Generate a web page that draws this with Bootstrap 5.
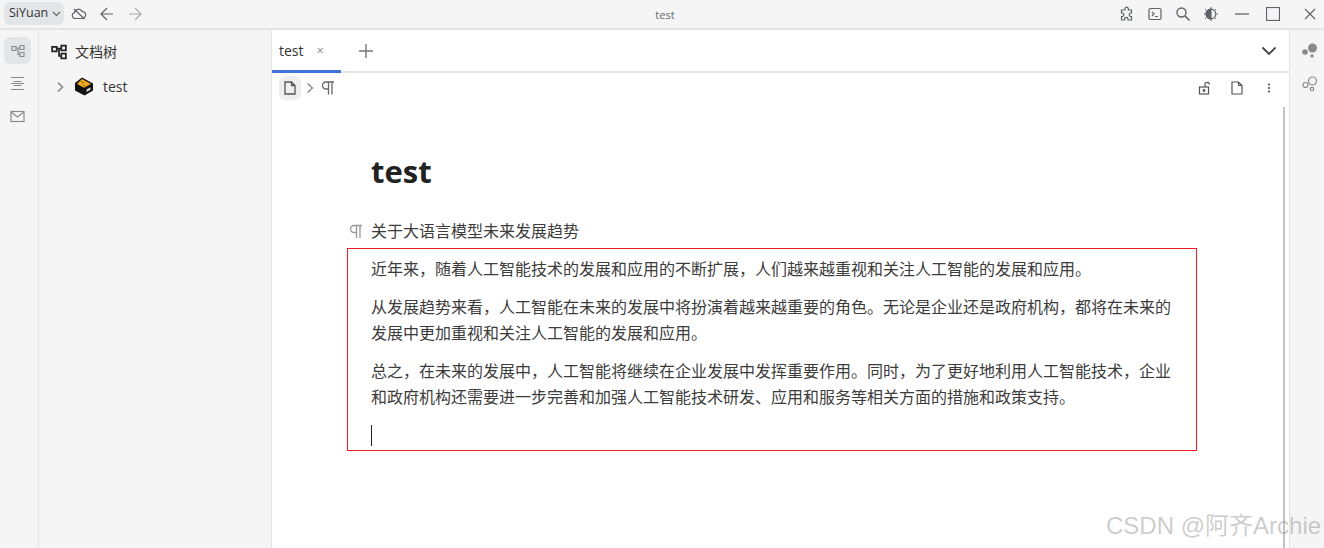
<!DOCTYPE html>
<html lang="zh">
<head>
<meta charset="utf-8">
<title>test</title>
<link href="https://cdn.jsdelivr.net/npm/bootstrap@5.3.0/dist/css/bootstrap.min.css" rel="stylesheet">
<style>
html,body{height:100%;overflow:hidden}
body{font-family:"Open Sans","Noto Sans CJK SC",sans-serif;color:#222;background:#fff;font-size:14px}
svg{display:block;fill:none;stroke:currentColor;stroke-width:1.2}
.app-shell{width:1324px;height:548px;position:relative;overflow:hidden}
.top-bar{height:30px;background:#f5f5f5;border-bottom:2px solid #e4e4e4;color:#5f6368;padding-left:4px;padding-right:6px}
.brand-btn{height:23px;width:60px;margin-top:-1px;border-radius:6px;background:#e3e5e7;font-size:12.5px;color:#333;padding-left:5px;gap:4px}
.brand-btn svg{color:#666}
.top-title{position:absolute;left:6px;right:0;top:7px;text-align:center;font-size:11px;color:#6b6b6b}
.top-ico{width:16px;height:16px}
.ico-cloud{margin-left:7px}
.ico-nav{margin-left:12px}
.ico-min{margin-left:4px;width:14px;height:14px}
.ico-max{margin-left:5px;width:14px;height:14px}
.ico-close{margin-left:12px;margin-right:2px;width:12px;height:12px}
.dock-left{width:39px;background:#f5f5f5;border-right:1px solid #e4e4e4;padding:7px 4px;gap:6px;color:#8a8a8a}
.dock-btn{width:27px;height:27px;border-radius:6px}
.dock-btn.is-on{background:#e3e5e7}
.tree-pane{width:233px;background:#f5f5f5;border-right:1px solid #e4e4e4}
.tree-head{height:43px;padding-left:12px;gap:8px;font-size:14px;color:#333}
.tree-row{height:27px;padding-left:17px;color:#333}
.tree-name{font-size:14px;margin-left:9px}
.tree-logo{margin-left:8px}
.main-pane{width:1017px;min-width:0;background:#fff;position:relative}
.tab-bar{height:43px;border-bottom:2px solid #e4e4e4;position:relative}
.doc-tab{width:69px;height:43px;border-bottom:3px solid #4470dc;margin-bottom:-2px;padding-left:7px;padding-top:1px;font-size:14px;color:#333;gap:13px}
.tab-x{font-size:13px;color:#888;line-height:1}
.tab-plus{margin:14px 0 0 18px;color:#777}
.tab-more{margin:16px 12px 0 auto;color:#444}
.crumb-bar{height:30px;padding-left:7px;padding-right:15px;color:#555}
.crumb-doc{width:22px;height:24px;border-radius:6px;background:#efefef}
.crumb-arrow{margin-left:5px;color:#888}
.crumb-para{margin-left:6px;color:#666}
.act-gap{margin-left:18px}
.act-gap-b{margin-left:20px}
.editor-pane{position:relative;height:445px}
.doc-title{font-size:31px;font-weight:700;line-height:44px;margin:0;padding:46px 0 0 99px;height:91px;color:#222}
.para-first{margin:24px 0 0;font-size:16px;line-height:26px;height:26px;padding-left:99px;position:relative;color:#3c3c3c}
.para-mark{position:absolute;left:77px;top:6px;color:#999}
.red-frame{width:850px;height:203px;margin-left:75px;margin-top:4px;border:1px solid #f01a24;padding:7px 22px 0 23px;font-size:16px;line-height:26px;color:#3c3c3c}
.red-frame p{margin:0 0 12px}
.caret-line{width:1px;height:21px;background:#222;margin-top:15px}
.scroll-thumb{position:absolute;right:4px;top:4px;bottom:0;width:2px;background:#c4c4c4}
.dock-right{width:35px;background:#f5f5f5;border-left:1px solid #e4e4e4;padding:12px 0 0 6px;gap:15px;color:#8a8a8a}
.water-mark{position:absolute;left:1106px;top:510px;font-family:"Liberation Sans","Noto Sans CJK SC",sans-serif;font-size:24px;line-height:32px;color:rgba(120,120,120,.38);white-space:nowrap}
</style>
</head>
<body>
<div class="app-shell d-flex flex-column">
  <div class="top-bar d-flex align-items-center flex-shrink-0">
    <div class="brand-btn d-flex align-items-center">SiYuan
      <svg width="9" height="6" viewBox="0 0 9 6"><path d="M1 1l3.500 3.500L8 1"/></svg></div>
    <svg class="ico-cloud top-ico" viewBox="0 0 16 16"><path d="M4 12.500a3 3 0 0 1-.5-5.900A4 4 0 0 1 11 5.400a3.400 3.400 0 0 1 2 6.300c-.5.600-1.200.8-2 .8zM3 3l10.500 10"/></svg>
    <svg class="ico-nav top-ico" viewBox="0 0 16 16"><path d="M14 8H2M8 2L2 8l6 6"/></svg>
    <svg class="ico-nav top-ico opacity-50" viewBox="0 0 16 16"><path d="M2 8h12M8 2l6 6-6 6"/></svg>
    <div class="top-title">test</div>
    <div class="ms-auto d-flex align-items-center" style="gap:12px">
      <svg class="top-ico" viewBox="0 0 16 16"><path d="M6 2.500a1.700 1.700 0 0 1 3.300 0V4h3.200v3h-1a1.800 1.800 0 0 0 0 3.500h1v3.500H9v-1a1.700 1.700 0 0 0-3.400 0v1H2.500v-3.500h1a1.800 1.800 0 0 0 0-3.500h-1V4H6z"/></svg>
      <svg class="top-ico" viewBox="0 0 16 16"><rect x="2" y="2.500" width="12" height="11" rx="1.500"/><path d="M5 6l2 2-2 2M8 10.500h3"/></svg>
      <svg class="top-ico" viewBox="0 0 16 16"><circle cx="6.500" cy="6.500" r="4.500" stroke-width="1.400"/><path d="M10 10l4.500 4.500" stroke-width="1.600"/></svg>
      <svg class="top-ico" viewBox="0 0 16 16"><circle cx="8" cy="8" r="4.800"/><path d="M8 3a5 5 0 0 0 0 10z" fill="currentColor"/><path d="M8 1v1.500M8 13.500V15M2 3l1 1M13 3l-1 1M2 13l1-1M13 13l-1-1M1 8h1.500M13.500 8H15" stroke-width="1"/></svg>
      <svg class="ico-min" viewBox="0 0 14 14"><path d="M0 7h14" stroke-width="1.300"/></svg>
      <svg class="ico-max" viewBox="0 0 14 14"><rect x=".5" y=".5" width="13" height="13"/></svg>
      <svg class="ico-close" viewBox="0 0 12 12"><path d="M1 1l10 10M11 1L1 11" stroke-width="1.200"/></svg>
    </div>
  </div>
  <div class="d-flex flex-grow-1" style="min-height:0">
    <div class="dock-left d-flex flex-column flex-shrink-0">
      <div class="dock-btn is-on d-flex align-items-center justify-content-center">
        <svg width="14" height="14" viewBox="0 0 14 14"><path d="M1 2.500h4v4H1zM9 1.500h4v4H9zM9 8.500h4v4H9zM5 4h4M7 4v6.500h2"/></svg></div>
      <div class="dock-btn d-flex align-items-center justify-content-center">
        <svg width="15" height="15" viewBox="0 0 15 15"><path d="M1 1.500h13M3.500 5.500h8M1 7.500h13M3.500 9.500h8M1 13.500h13"/></svg></div>
      <div class="dock-btn d-flex align-items-center justify-content-center">
        <svg width="15" height="15" viewBox="0 0 15 15"><rect x="1" y="2.500" width="13" height="10"/><path d="M1 3l6.500 5L14 3"/></svg></div>
    </div>
    <div class="tree-pane d-flex flex-column flex-shrink-0">
      <div class="tree-head d-flex align-items-center">
        <svg width="16" height="16" viewBox="0 0 14 14" style="stroke-width:1.500;color:#222"><path d="M1 2.500h4v4H1zM9 1.500h4v4H9zM9 8.500h4v4H9zM5 4h4M7 4v6.500h2"/></svg>
        <span>文档树</span>
      </div>
      <div class="tree-row d-flex align-items-center">
        <svg width="10" height="12" viewBox="0 0 10 12" style="color:#888;stroke-width:1.600"><path d="M2 1.500l4.500 4.500L2 10.500"/></svg>
        <svg class="tree-logo" width="20" height="19" viewBox="0 0 20 19"><path d="M8 .5L19 6.500v7L10.500 18.500 1 13.500V6z" fill="#111" stroke="none"/><path d="M8 2l9 5-7 3.800L3 7z" fill="#f2ab1e" stroke="none"/><path d="M7 4.500l3 1.700M9 8l2 1" stroke="#8a6a10" stroke-width="1"/><path d="M12.500 12.500l4-2.200v2.500l-4 2.200z" fill="#d8d8d8" stroke="none"/></svg>
        <span class="tree-name">test</span>
      </div>
    </div>
    <div class="main-pane d-flex flex-column flex-shrink-0">
      <div class="tab-bar d-flex align-items-start flex-shrink-0">
        <div class="doc-tab d-flex align-items-center"><span>test</span><span class="tab-x">×</span></div>
        <svg class="tab-plus" width="14" height="14" viewBox="0 0 14 14"><path d="M7 0v14M0 7h14" stroke-width="1.400"/></svg>
        <svg class="tab-more" width="16" height="10" viewBox="0 0 16 10"><path d="M1.500 1.500L8 8l6.500-6.500" stroke-width="1.800"/></svg>
      </div>
      <div class="crumb-bar d-flex align-items-center flex-shrink-0">
        <div class="crumb-doc d-flex align-items-center justify-content-center">
          <svg width="12" height="14" viewBox="0 0 12 14"><path d="M1 1h6.500L11 4.500V13H1zM7.500 1v3.500H11" stroke-width="1.300"/></svg></div>
        <svg class="crumb-arrow" width="9" height="12" viewBox="0 0 9 12"><path d="M1.500 1.500L6.500 6l-5 4.500" stroke-width="1.300"/></svg>
        <svg class="crumb-para" width="14" height="14" viewBox="0 0 14 14"><path d="M13 1H5a3.500 3.500 0 0 0 0 7h2M7.500 1v12.500M11 1v12.500" stroke-width="1.300"/></svg>
        <div class="ms-auto d-flex align-items-center">
          <svg width="14" height="14" viewBox="0 0 14 14"><rect x="1.500" y="6" width="9" height="7"/><path d="M7 6V3.500a2.200 2.200 0 0 1 4.400 0"/><circle cx="6" cy="9.500" r=".8" fill="currentColor"/></svg>
          <svg class="act-gap" width="14" height="14" viewBox="0 0 12 14"><path d="M1 1h6.500L11 4.500V13H1zM7.500 1v3.500H11" stroke-width="1.200"/></svg>
          <svg class="act-gap-b" width="10" height="14" viewBox="0 0 10 14" style="stroke:none;fill:currentColor"><circle cx="5" cy="3.500" r="1.100"/><circle cx="5" cy="7" r="1.100"/><circle cx="5" cy="10.500" r="1.100"/></svg>
        </div>
      </div>
      <div class="editor-pane flex-grow-1">
        <h1 class="doc-title">test</h1>
        <p class="para-first"><svg class="para-mark" width="14" height="15" viewBox="0 0 14 14"><path d="M13 1H5a3.500 3.500 0 0 0 0 7h2M7.500 1v12.500M11 1v12.500" stroke-width="1.300"/></svg>关于大语言模型未来发展趋势</p>
        <div class="red-frame">
          <p>近年来，随着人工智能技术的发展和应用的不断扩展，人们越来越重视和关注人工智能的发展和应用。</p>
          <p>从发展趋势来看，人工智能在未来的发展中将扮演着越来越重要的角色。无论是企业还是政府机构，都将在未来的发展中更加重视和关注人工智能的发展和应用。</p>
          <p>总之，在未来的发展中，人工智能将继续在企业发展中发挥重要作用。同时，为了更好地利用人工智能技术，企业和政府机构还需要进一步完善和加强人工智能技术研发、应用和服务等相关方面的措施和政策支持。</p>
          <div class="caret-line"></div>
        </div>
        <div class="scroll-thumb"></div>
      </div>
    </div>
    <div class="dock-right d-flex flex-column align-items-center flex-grow-1">
      <svg width="18" height="18" viewBox="0 0 18 18" style="stroke:none;fill:currentColor"><circle cx="11.500" cy="6" r="4.500"/><circle cx="4" cy="10" r="2.800"/><circle cx="11" cy="14" r="1.700"/></svg>
      <svg width="18" height="18" viewBox="0 0 18 18"><circle cx="11.500" cy="6" r="4"/><circle cx="4.500" cy="10" r="2.500"/><circle cx="11" cy="14" r="1.700"/></svg>
    </div>
  </div>
  <div class="water-mark">CSDN @阿齐Archie</div>
</div>
<script src="https://cdn.jsdelivr.net/npm/bootstrap@5.3.0/dist/js/bootstrap.bundle.min.js"></script>
</body>
</html>
